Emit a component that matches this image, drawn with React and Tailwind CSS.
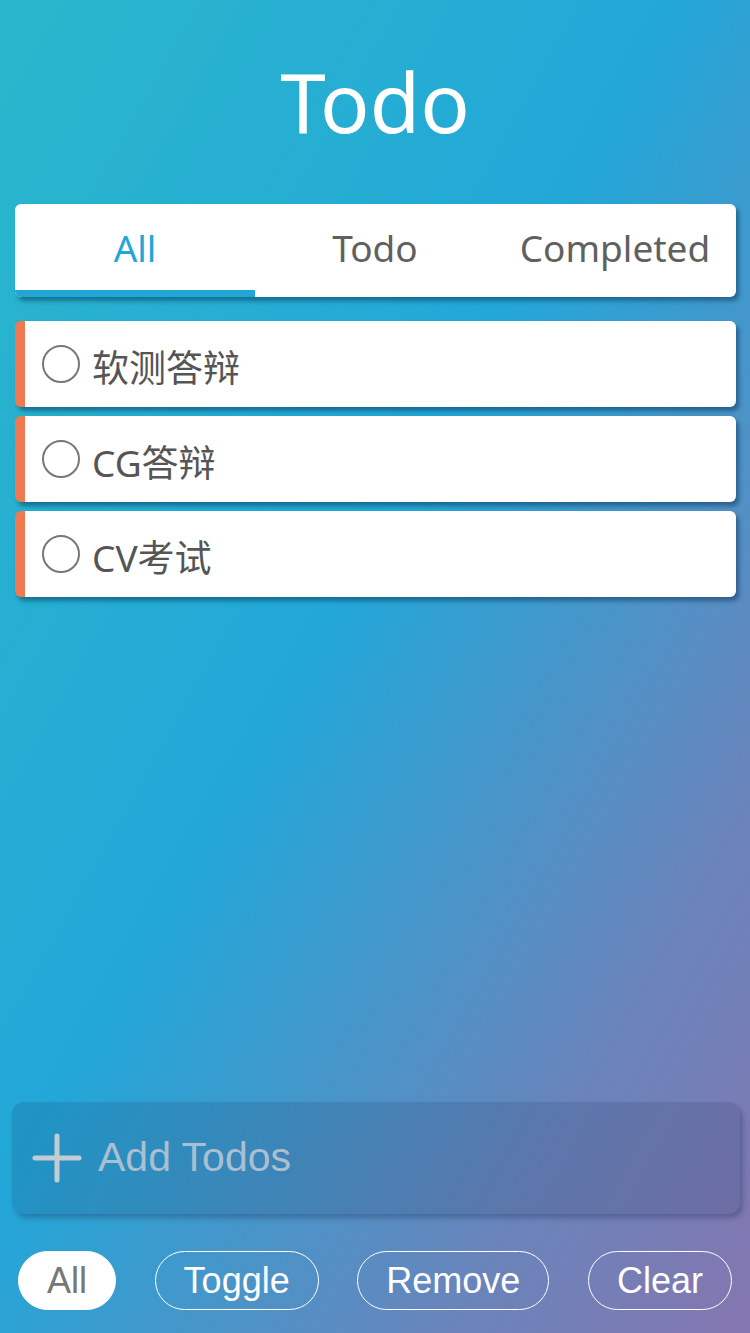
import React from "react";

const items = ["软测答辩", "CG答辩", "CV考试"];

export default function App() {
  const sans = { fontFamily: '"Noto Sans", "Open Sans", "Noto Sans CJK SC", sans-serif' };
  const arial = { fontFamily: '"Liberation Sans", Arial, sans-serif' };
  return (
    <div
      className="w-[750px] h-[1333px] flex flex-col bg-[linear-gradient(to_bottom_right,#2ab7cb_0%,#22a7d8_45%,#6a84bb_80%,#8576b0_100%)]"
      style={sans}
    >
      <h1 className="text-white text-[82px] leading-none text-center pt-[60px] h-[204px]">Todo</h1>

      <div className="mx-[15px] w-[721px] h-[93px] bg-white rounded-[6px] shadow-[3px_4px_4px_rgba(0,40,70,0.45)] flex relative overflow-hidden">
        {["All", "Todo", "Completed"].map((t, i) => (
          <div
            key={t}
            className={
              "w-[240px] flex items-center justify-center text-[37px] pb-[6px] " +
              (i === 0 ? "text-[#22a6d6]" : "text-[#606060]")
            }
          >
            {t}
          </div>
        ))}
        <div className="absolute left-0 bottom-0 w-[240px] h-[7px] bg-[#22a6d6]" />
      </div>

      <div className="flex flex-col gap-[9px] mt-[24px] mx-[15px] w-[721px]">
        {items.map((t) => (
          <div
            key={t}
            className="h-[86px] bg-white rounded-[6px] border-l-[10px] border-[#ef7a50] flex items-center pl-[17px] shadow-[3px_4px_4px_rgba(0,40,70,0.45)]"
          >
            <div className="w-[38px] h-[38px] rounded-full border-2 border-[#777]" />
            <span className="ml-[12px] text-[37px] text-[#555] leading-none pt-[6px]" style={sans}>
              {t}
            </span>
          </div>
        ))}
      </div>

      <div className="flex-1" />

      <div className="mx-[12px] w-[728px] h-[112px] rounded-[12px] bg-[rgba(20,40,80,0.15)] shadow-[3px_4px_5px_rgba(30,50,90,0.35)] flex items-center pl-[19px]">
        <svg width="52" height="52" viewBox="0 0 52 52">
          <path d="M26 4 V48 M4 26 H48" stroke="#c3cbd3" strokeWidth="5" strokeLinecap="round" />
        </svg>
        <span className="ml-[15px] text-[41px] text-[#a9bfd2]" style={arial}>
          Add Todos
        </span>
      </div>

      <div className="flex justify-between px-[18px] mt-[37px] mb-[23px]" style={arial}>
        <button className="h-[59px] px-[28px] rounded-full bg-white border border-white text-[36px] text-[#777]">All</button>
        <button className="h-[59px] px-[28px] rounded-full border border-white text-[36px] text-white">Toggle</button>
        <button className="h-[59px] px-[28px] rounded-full border border-white text-[36px] text-white">Remove</button>
        <button className="h-[59px] px-[28px] rounded-full border border-white text-[36px] text-white">Clear</button>
      </div>
    </div>
  );
}
